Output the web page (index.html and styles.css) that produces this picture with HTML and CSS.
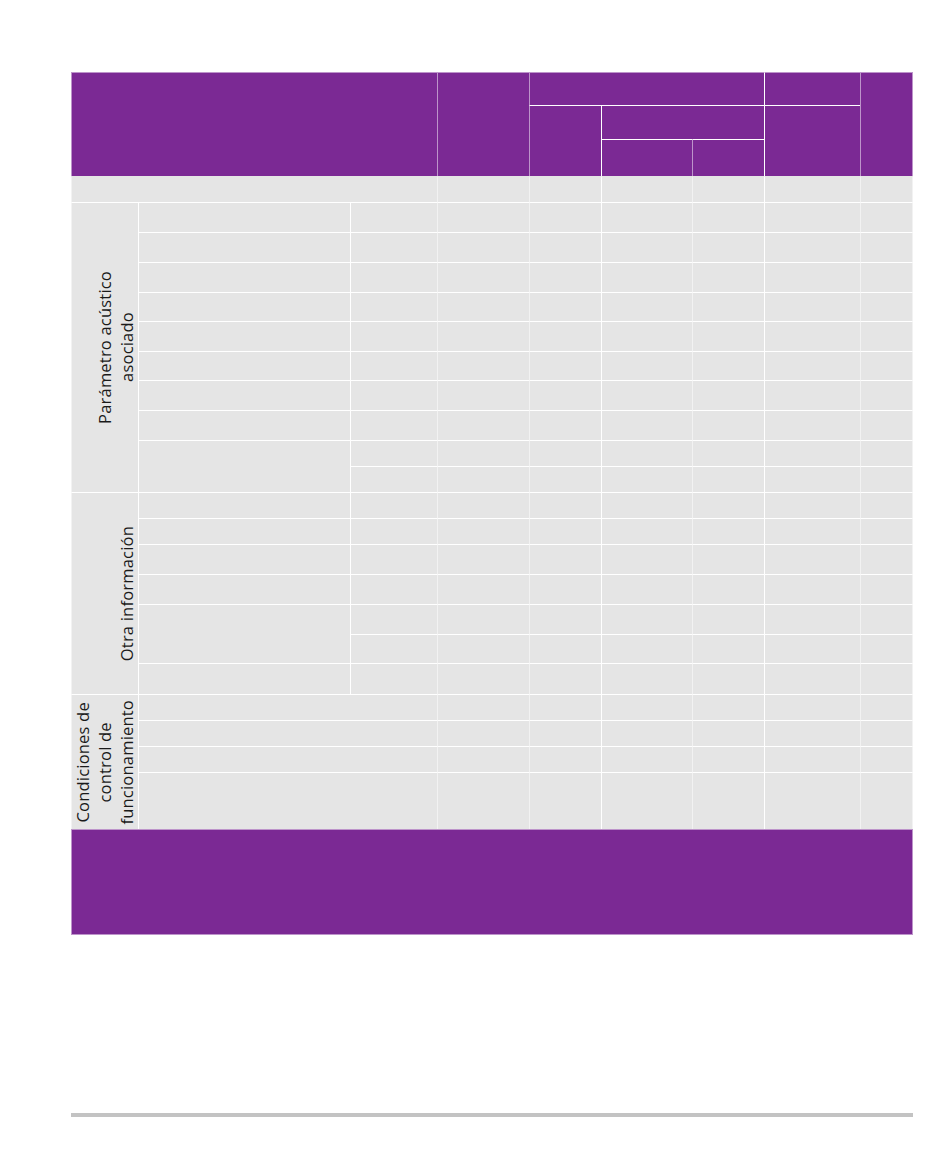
FILE: index.html
```html
<!DOCTYPE html>
<html lang="es">
<head>
<meta charset="utf-8">
<title>Tabla</title>
<link rel="stylesheet" href="styles.css">
</head>
<body>
<div class="page">
  <div class="grid">
    <!-- header -->
    <div class="h s t hA"></div>
    <div class="h s t hB"></div>
    <div class="h s t hC"></div>
    <div class="h t hD"></div>
    <div class="h s t e hE"></div>
    <div class="h s hF"></div>
    <div class="h hG"></div>
    <div class="h hJ"></div>
    <div class="h hH"></div>
    <div class="h s hI"></div>

    <!-- body spanning cells -->
    <div class="s n bA"></div>
    <div class="s lab lP"><span>Parámetro acústico<br>asociado</span></div>
    <div class="mP"></div>
    <div class="s lab lO"><span>Otra información</span></div>
    <div class="mO"></div>
    <div class="s lab lC"><span>Condiciones de<br>control de<br>funcionamiento</span></div>
    <div class="w1"></div>
    <div class="w2"></div>
    <div class="w3"></div>
    <div class="w4"></div>
    <div class="h s t e ft"></div>

    <!-- r4 -->
    <div class="s n"></div><div class="s n"></div><div class="n"></div><div class="s n"></div><div class="n"></div><div class="s e n"></div>
    <!-- r5 -->
    <div></div><div></div><div class="s"></div><div class="s"></div><div></div><div class="s"></div><div></div><div class="s e"></div>
    <!-- r6 -->
    <div></div><div></div><div class="s"></div><div class="s"></div><div></div><div class="s"></div><div></div><div class="s e"></div>
    <!-- r7 -->
    <div></div><div></div><div class="s"></div><div class="s"></div><div></div><div class="s"></div><div></div><div class="s e"></div>
    <!-- r8 -->
    <div></div><div></div><div class="s"></div><div class="s"></div><div></div><div class="s"></div><div></div><div class="s e"></div>
    <!-- r9 -->
    <div></div><div></div><div class="s"></div><div class="s"></div><div></div><div class="s"></div><div></div><div class="s e"></div>
    <!-- r10 -->
    <div></div><div></div><div class="s"></div><div class="s"></div><div></div><div class="s"></div><div></div><div class="s e"></div>
    <!-- r11 -->
    <div></div><div></div><div class="s"></div><div class="s"></div><div></div><div class="s"></div><div></div><div class="s e"></div>
    <!-- r12 -->
    <div></div><div></div><div class="s"></div><div class="s"></div><div></div><div class="s"></div><div></div><div class="s e"></div>
    <!-- r13 -->
    <div></div><div class="s"></div><div class="s"></div><div></div><div class="s"></div><div></div><div class="s e"></div>
    <!-- r14 -->
    <div></div><div class="s"></div><div class="s"></div><div></div><div class="s"></div><div></div><div class="s e"></div>
    <!-- r15 -->
    <div></div><div></div><div class="s"></div><div class="s"></div><div></div><div class="s"></div><div></div><div class="s e"></div>
    <!-- r16 -->
    <div></div><div></div><div class="s"></div><div class="s"></div><div></div><div class="s"></div><div></div><div class="s e"></div>
    <!-- r17 -->
    <div></div><div></div><div class="s"></div><div class="s"></div><div></div><div class="s"></div><div></div><div class="s e"></div>
    <!-- r18 -->
    <div></div><div></div><div class="s"></div><div class="s"></div><div></div><div class="s"></div><div></div><div class="s e"></div>
    <!-- r19 -->
    <div></div><div class="s"></div><div class="s"></div><div></div><div class="s"></div><div></div><div class="s e"></div>
    <!-- r20 -->
    <div></div><div class="s"></div><div class="s"></div><div></div><div class="s"></div><div></div><div class="s e"></div>
    <!-- r21 -->
    <div></div><div></div><div class="s"></div><div class="s"></div><div></div><div class="s"></div><div></div><div class="s e"></div>
    <!-- r22 -->
    <div class="s"></div><div class="s"></div><div></div><div class="s"></div><div></div><div class="s e"></div>
    <!-- r23 -->
    <div class="s"></div><div class="s"></div><div></div><div class="s"></div><div></div><div class="s e"></div>
    <!-- r24 -->
    <div class="s"></div><div class="s"></div><div></div><div class="s"></div><div></div><div class="s e"></div>
    <!-- r25 -->
    <div class="s"></div><div class="s"></div><div></div><div class="s"></div><div></div><div class="s e"></div>
  </div>
  <div class="rule"></div>
</div>
</body>
</html>
```

FILE: styles.css
```css
html, body {
  margin: 0;
  padding: 0;
  background: #ffffff;
}

body {
  font-family: "Open Sans", "Liberation Sans", sans-serif;
  color: #1a1a1a;
}

.page {
  padding: 72px 0 0 71px;
}

.grid {
  display: grid;
  width: 842px;
  grid-template-columns: 67px 212px 87px 92px 72px 91px 72px 96px 53px;
  grid-template-rows:
    33px 34px 37px
    26px
    30px 30px 30px 29px 30px 29px 30px 30px 26px 26px
    26px 26px 30px 30px 30px 29px 31px
    26px 26px 26px 57px
    106px;
}

.grid > div {
  box-sizing: border-box;
  background: #e5e5e5;
  border-left: 1px solid #ffffff;
  border-top: 1px solid #ffffff;
}

.grid > .s { border-left-color: rgba(255, 255, 255, 0.5); }
.grid > .t { border-top-color: rgba(255, 255, 255, 0.5); }
.grid > .n { border-top-color: transparent; }
.grid > .e { border-right: 1px solid rgba(255, 255, 255, 0.5); }
.grid > .h { background: #7b2994; }

/* header cells */
.hA { grid-column: 1 / 4; grid-row: 1 / 4; }
.hB { grid-column: 4; grid-row: 1 / 4; }
.hC { grid-column: 5 / 8; grid-row: 1; }
.hD { grid-column: 8; grid-row: 1; }
.hE { grid-column: 9; grid-row: 1 / 4; }
.hF { grid-column: 5; grid-row: 2 / 4; }
.hG { grid-column: 6 / 8; grid-row: 2; }
.hJ { grid-column: 8; grid-row: 2 / 4; }
.hH { grid-column: 6; grid-row: 3; }
.hI { grid-column: 7; grid-row: 3; }

/* body spanning cells */
.bA { grid-column: 1 / 4; grid-row: 4; }
.lP { grid-column: 1; grid-row: 5 / 15; }
.mP { grid-column: 2; grid-row: 13 / 15; }
.lO { grid-column: 1; grid-row: 15 / 22; }
.mO { grid-column: 2; grid-row: 19 / 21; }
.lC { grid-column: 1; grid-row: 22 / 26; }
.w1 { grid-column: 2 / 4; grid-row: 22; }
.w2 { grid-column: 2 / 4; grid-row: 23; }
.w3 { grid-column: 2 / 4; grid-row: 24; }
.w4 { grid-column: 2 / 4; grid-row: 25; }
.grid > .ft {
  grid-column: 1 / 10;
  grid-row: 26;
  border-bottom: 1px solid rgba(255, 255, 255, 0.5);
}

/* rotated labels */
.lab {
  display: flex;
  align-items: center;
  justify-content: flex-end;
  overflow: visible;
}

.lab span {
  writing-mode: vertical-rl;
  transform: rotate(180deg);
  font-size: 16.5px;
  letter-spacing: 0.2px;
  line-height: 22px;
  text-align: center;
  white-space: nowrap;
}

.rule {
  width: 842px;
  height: 4px;
  margin-top: 178px;
  background: #c3c3c3;
}
```
